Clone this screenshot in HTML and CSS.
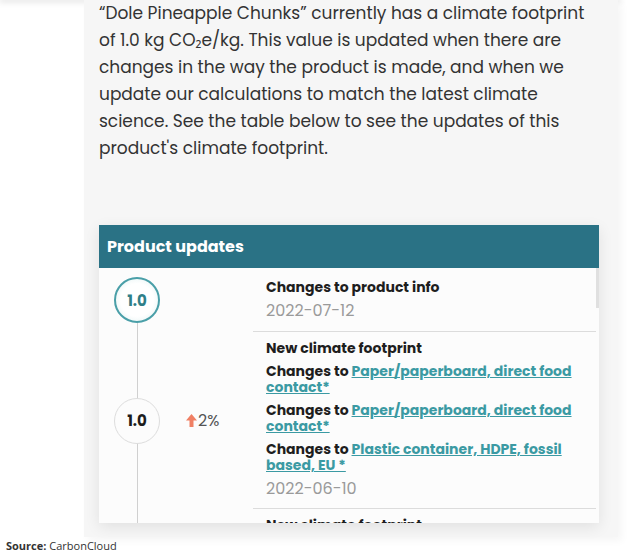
FILE: index.html
```html
<!DOCTYPE html>
<html lang="en">
<head>
  <meta charset="UTF-8">
  <meta name="viewport" content="width=device-width, initial-scale=1.0">
  <title>Dole Pineapple Chunks - Climate footprint</title>
  <link rel="stylesheet" href="styles.css">
</head>
<body>
  <div class="page-top"></div>
  <main class="panel">
    <p class="intro">“Dole Pineapple Chunks” currently has a climate footprint of 1.0 kg CO₂e/kg. This value is updated when there are changes in the way the product is made, and when we update our calculations to match the latest climate science. See the table below to see the updates of this product's climate footprint.</p>

    <section class="updates">
      <h2 class="updates-title">Product updates</h2>
      <div class="updates-body">

        <div class="update update-first">
          <div class="version"><span class="badge badge-current">1.0</span></div>
          <div class="change"></div>
          <div class="details">
            <div class="event">Changes to product info</div>
            <div class="date">2022-07-12</div>
          </div>
        </div>

        <div class="update">
          <div class="version"><span class="badge">1.0</span></div>
          <div class="change">
            <svg class="arrow" viewBox="0 0 11 13" width="11" height="13"><path d="M5.5 0 L11 6.5 L7.5 6.5 L7.5 13 L3.5 13 L3.5 6.5 L0 6.5 Z"/></svg>2%
          </div>
          <div class="details">
            <div class="event">New climate footprint</div>
            <div class="item">Changes to <a href="#">Paper/paperboard, direct food contact*</a></div>
            <div class="item">Changes to <a href="#">Paper/paperboard, direct food contact*</a></div>
            <div class="item">Changes to <a href="#">Plastic container, HDPE, fossil based, EU *</a></div>
            <div class="date">2022-06-10</div>
          </div>
        </div>

        <div class="update">
          <div class="version"><span class="badge">1.0</span></div>
          <div class="change"></div>
          <div class="details">
            <div class="event">New climate footprint</div>
            <div class="item">Changes to <a href="#">Pineapple, canned*</a></div>
            <div class="item">Changes to <a href="#">Transport, lorry, EU*</a></div>
            <div class="date">2022-04-21</div>
          </div>
        </div>

        <div class="update update-last">
          <div class="version"><span class="badge">1.0</span></div>
          <div class="change"></div>
          <div class="details">
            <div class="event">Product added</div>
            <div class="date">2021-01-12</div>
          </div>
        </div>

      </div>
      <div class="scroll-thumb"></div>
    </section>
  </main>
  <p class="source"><b>Source:</b> CarbonCloud</p>
</body>
</html>
```

FILE: styles.css
```css
body {
  margin: 0;
  background: #fff;
  font-family: "Poppins", "Open Sans", sans-serif;
  color: #2b2b2b;
}
.page-top {
  height: 0;
  width: 620px;
  box-shadow: 0 0 6px 1px rgba(0, 0, 0, 0.25);
}
.panel {
  width: 504px;
  margin-left: 84px;
  padding: 0 15px 14px;
  background: #f6f6f6;
  box-shadow: 4px 4px 8px rgba(0, 0, 0, 0.04);
}
.intro {
  margin: 0;
  padding-bottom: 63px;
  font-size: 17px;
  line-height: 27px;
  color: #333;
}
.updates {
  position: relative;
  width: 500px;
  background: #fcfcfc;
  box-shadow: 0 4px 14px rgba(0, 0, 0, 0.09);
}
.updates-title {
  margin: 0;
  height: 43px;
  padding: 0 8px;
  display: flex;
  align-items: center;
  background: #2a7285;
  color: #fff;
  font-size: 16px;
  font-weight: 700;
}
.updates-body {
  height: 255px;
  overflow: hidden;
  padding-right: 3px;
}
/* scrollbar of the list, drawn over its right edge */
.scroll-thumb {
  position: absolute;
  top: 43px;
  right: 0;
  width: 3px;
  height: 40px;
  background: #e0e0e0;
}
.update {
  display: grid;
  grid-template-columns: 76px 78px 1fr;
}
.version {
  display: flex;
  align-items: center;
  justify-content: center;
  background: linear-gradient(#d0d0d0, #d0d0d0) center / 1px 100% no-repeat;
}
.update-first .version {
  background-position: center bottom;
  background-size: 1px 50%;
}
.update-last .version {
  background-position: center top;
  background-size: 1px 50%;
}
.badge {
  width: 44px;
  height: 44px;
  border-radius: 50%;
  border: 1px solid #ddd;
  background: #fcfcfc;
  display: flex;
  align-items: center;
  justify-content: center;
  font-size: 15px;
  font-weight: 700;
  color: #1d1d1d;
}
.badge-current {
  border: 2px solid #4a9fa8;
  width: 42px;
  height: 42px;
  background: radial-gradient(circle, #fff 55%, #dcefef 100%);
  color: #2f7f89;
}
.change {
  display: flex;
  align-items: center;
  padding-left: 11px;
  font-size: 16px;
  color: #555;
}
.arrow {
  fill: #f08064;
  margin-right: 1px;
}
.details {
  padding: 8px 0 9px 13px;
  border-bottom: 1px solid #dcdcdc;
  font-size: 14px;
  font-weight: 700;
  line-height: 16px;
  color: #1e1e1e;
}
.update-first .details {
  padding: 11px 0 10px 13px;
}
.item {
  margin-top: 7px;
}
.item a {
  color: #3b9aa3;
}
.date {
  margin-top: 6px;
  font-size: 16px;
  font-weight: 400;
  line-height: 20px;
  color: #9a9a9a;
}
.source {
  margin: 1px 6px;
  font-family: "Open Sans", sans-serif;
  font-size: 11px;
  color: #333;
}
```
